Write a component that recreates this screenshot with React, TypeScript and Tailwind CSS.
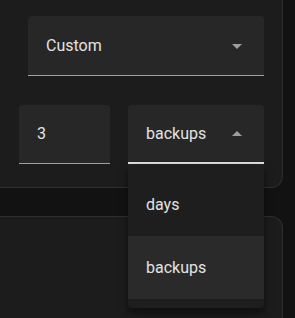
// Retention settings: period type + count, with the unit menu open.
const font = { fontFamily: 'Roboto, "Liberation Sans", sans-serif' };

function Caret({ up }: { up?: boolean }) {
  return (
    <svg width="24" height="24" viewBox="0 0 24 24" className="shrink-0 fill-[#9e9e9e]">
      <path d={up ? 'M7 14l5-5 5 5z' : 'M7 10l5 5 5-5z'} />
    </svg>
  );
}

export default function App() {
  return (
    <div className="h-[318px] w-[295px] overflow-hidden bg-[#121212] text-[#e3e3e3]" style={font}>
      <section className="w-[283px] rounded-br-xl border-r border-b border-[#2f2f2f] bg-[#1c1c1c] pt-4 pb-[23px]">
        <div className="ml-[28px] flex h-[60px] w-[236px] items-center justify-between rounded-t border-b border-[#a0a0a0] bg-[#272727] pl-[18px] pr-[15px]">
          <span className="text-[16px]">Custom</span>
          <Caret />
        </div>

        <div className="mt-[29px] flex gap-[18px] pl-[19px]">
          <div className="flex h-[59px] w-[91px] items-center rounded-t border-b border-[#a0a0a0] bg-[#272727] pl-[18px] text-[16px]">
            3
          </div>
          <div className="relative w-[136px]">
            <div className="flex h-[59px] items-center justify-between rounded-t border-b-2 border-[#e0e0e0] bg-[#272727] pl-[18px] pr-[15px]">
              <span className="text-[16px]">backups</span>
              <Caret up />
            </div>
            <ul className="absolute left-0 top-[59px] z-10 w-[136px] rounded-b bg-[#1e1e1e] py-[9px] text-[16px] shadow-[0_5px_8px_rgba(0,0,0,0.5)]">
              <li className="flex h-[63px] items-center pl-[18px]">days</li>
              <li className="flex h-[63px] items-center bg-[#2a2a2a] pl-[18px]">backups</li>
            </ul>
          </div>
        </div>
      </section>

      <section className="mt-[28px] h-[103px] w-[283px] rounded-tr-xl border-t border-r border-[#2f2f2f] bg-[#1c1c1c]" />
    </div>
  );
}
